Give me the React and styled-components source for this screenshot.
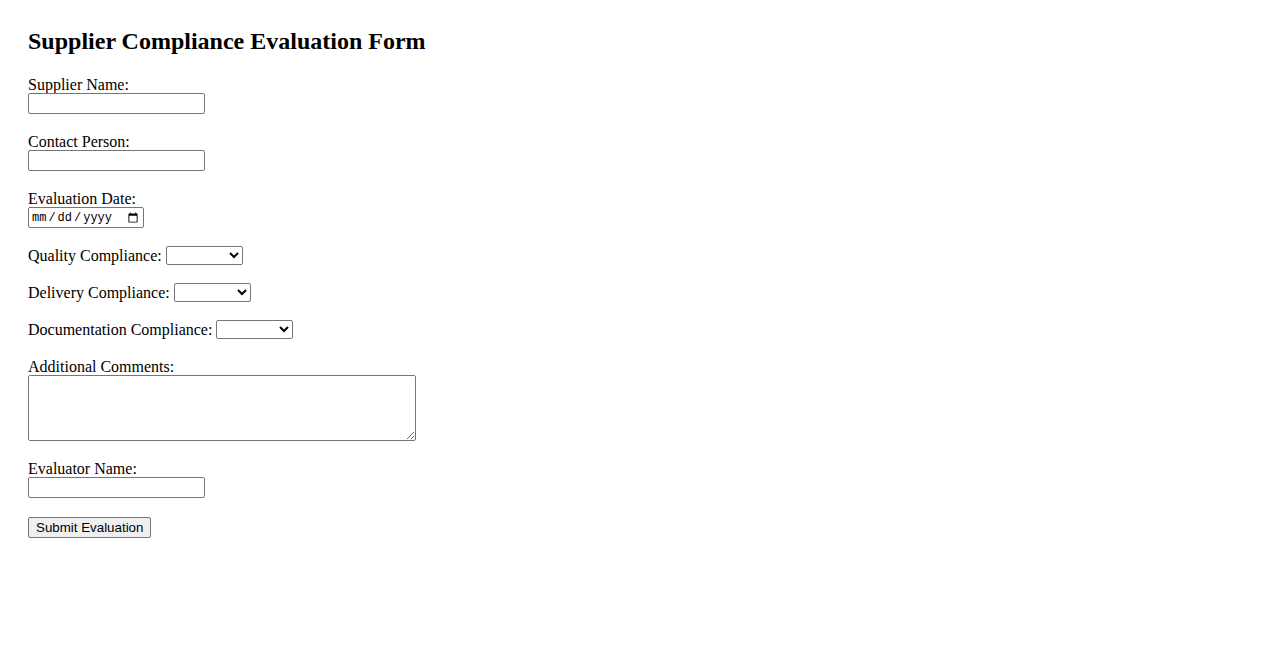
import React from 'react';
import styled, { createGlobalStyle } from 'styled-components';

const GlobalStyle = createGlobalStyle`
  html, body {
    margin: 0;
    padding: 0;
    background: #fff;
  }
  body {
    font-family: "Liberation Serif", "Times New Roman", serif;
    font-size: 16px;
    color: #000;
  }
`;

const Page = styled.div`
  padding: 28px;
`;

const Title = styled.h2`
  margin: 0 0 19px;
  font-size: 24px;
  font-weight: bold;
  line-height: normal;
`;

const Form = styled.form`
  display: flex;
  flex-direction: column;
  align-items: flex-start;
`;

const Field = styled.div`
  display: flex;
  flex-direction: ${(p) => (p.$inline ? 'row' : 'column')};
  align-items: ${(p) => (p.$inline ? 'center' : 'flex-start')};
  gap: ${(p) => (p.$inline ? '4px' : '0')};
  margin-bottom: ${(p) => p.$gap ?? 17}px;
`;

const Label = styled.label`
  display: block;
  padding-top: ${(p) => (p.$inline ? 0 : 3)}px;
  line-height: ${(p) => (p.$inline ? 18 : 16)}px;
  white-space: nowrap;
`;

const TextInput = styled.input`
  box-sizing: border-box;
  width: 177px;
  height: 21px;
  margin: 0;
  padding: 1px 2px;
  font: 13.33px "Liberation Sans", Arial, sans-serif;
  border: 1px solid #767676;
  border-radius: 2px;
  background: #fff;
`;

const DateInput = styled.input`
  box-sizing: border-box;
  width: 116px;
  height: 21px;
  margin: 0;
  padding: 1px 2px;
  font: 12px "Liberation Mono", "Courier New", monospace;
  border: 1px solid #767676;
  border-radius: 2px;
  background: #fff;

  &::-webkit-datetime-edit-text {
    padding: 0 1px;
  }
`;

const Select = styled.select`
  box-sizing: border-box;
  width: 77px;
  height: 19px;
  margin: 0;
  font: 13.33px "Liberation Sans", Arial, sans-serif;
  border: 1px solid #767676;
  border-radius: 2px;
  background: #fff;
`;

const Comments = styled.textarea`
  box-sizing: border-box;
  width: 388px;
  height: 66px;
  margin: 0;
  padding: 2px;
  font: 13.33px "Liberation Mono", monospace;
  border: 1px solid #767676;
  border-radius: 2px;
`;

const SubmitButton = styled.button`
  box-sizing: border-box;
  height: 21px;
  padding: 1px 7px;
  font: 13.33px "Liberation Sans", Arial, sans-serif;
  color: #000;
  background: #efefef;
  border: 1px solid #767676;
  border-radius: 2px;
`;

const ratings = ['', 'Compliant', 'Partial', 'Non-Compliant'];

function RatingSelect({ id }) {
  return (
    <Select id={id} defaultValue="">
      {ratings.map((r) => (
        <option key={r} value={r}>{r}</option>
      ))}
    </Select>
  );
}

export default function App() {
  return (
    <>
      <GlobalStyle />
      <Page>
        <Title>Supplier Compliance Evaluation Form</Title>
        <Form onSubmit={(e) => e.preventDefault()}>
          <Field>
            <Label htmlFor="supplierName">Supplier Name:</Label>
            <TextInput type="text" id="supplierName" />
          </Field>
          <Field>
            <Label htmlFor="contactPerson">Contact Person:</Label>
            <TextInput type="text" id="contactPerson" />
          </Field>
          <Field $gap={18}>
            <Label htmlFor="evaluationDate">Evaluation Date:</Label>
            <DateInput type="date" id="evaluationDate" />
          </Field>
          <Field $inline $gap={18}>
            <Label $inline htmlFor="quality">Quality Compliance:</Label>
            <RatingSelect id="quality" />
          </Field>
          <Field $inline $gap={18}>
            <Label $inline htmlFor="delivery">Delivery Compliance:</Label>
            <RatingSelect id="delivery" />
          </Field>
          <Field $inline $gap={17}>
            <Label $inline htmlFor="documentation">Documentation Compliance:</Label>
            <RatingSelect id="documentation" />
          </Field>
          <Field>
            <Label htmlFor="comments">Additional Comments:</Label>
            <Comments id="comments" />
          </Field>
          <Field $gap={19}>
            <Label htmlFor="evaluatorName">Evaluator Name:</Label>
            <TextInput type="text" id="evaluatorName" />
          </Field>
          <SubmitButton type="submit">Submit Evaluation</SubmitButton>
        </Form>
      </Page>
    </>
  );
}
